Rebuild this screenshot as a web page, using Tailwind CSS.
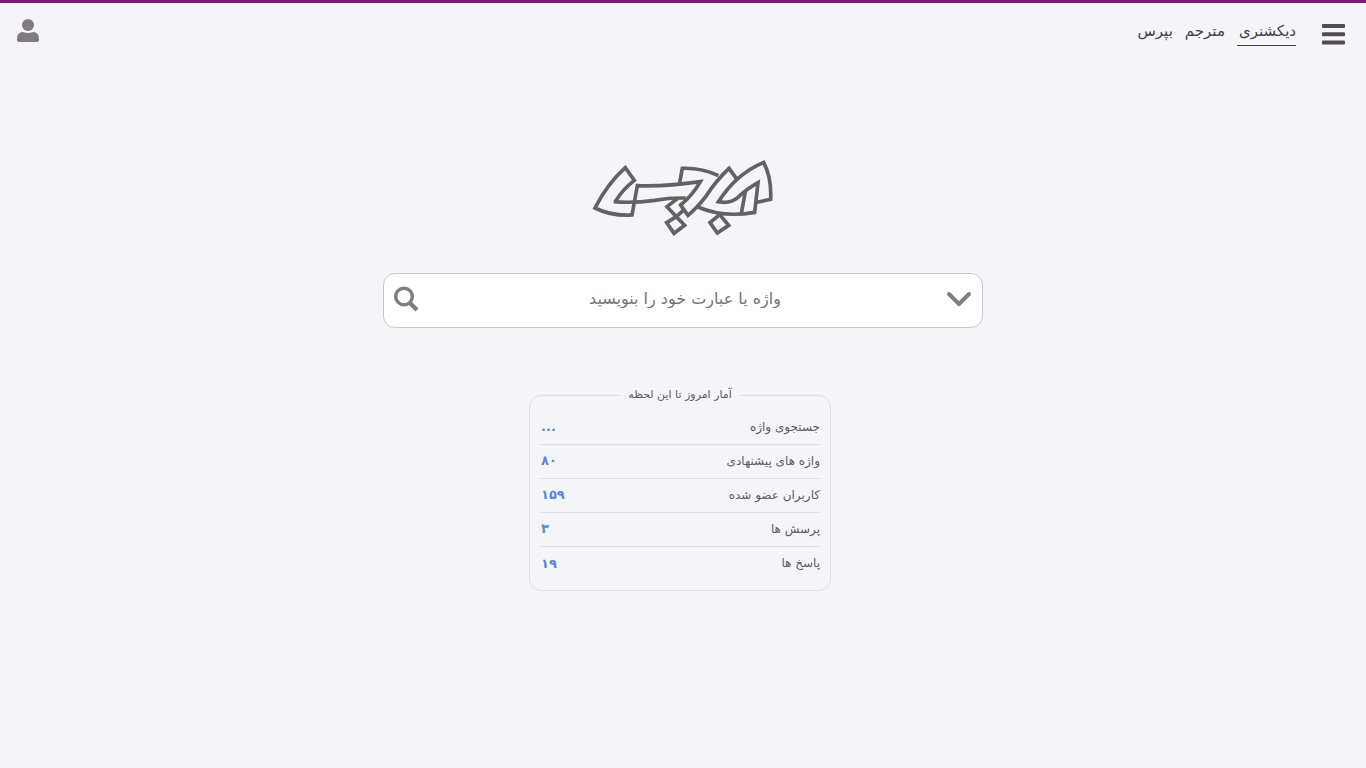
<!DOCTYPE html>
<html lang="fa" dir="rtl">
<head>
    <meta charset="UTF-8">
    <meta name="viewport" content="width=device-width, initial-scale=1">
    <title>آبادیس</title>
    <script src="https://cdn.jsdelivr.net/npm/@tailwindcss/browser@4"></script>
</head>
<body class="min-h-screen bg-[#f4f4f9] border-t-3 border-[#7f1776] font-['DejaVu_Sans',sans-serif] text-[#5c5c5f]">

<!-- Header -->
<header class="flex justify-between items-start px-4 pt-4">
    <div class="flex items-start gap-6">
        <button type="button" aria-label="منو" class="pt-1 pr-1">
            <svg class="w-6 h-6" viewBox="0 0 24 24" fill="#504d52"><rect x="0" y="1" width="23" height="4" rx="1"/><rect x="0" y="9.3" width="23" height="4" rx="1"/><rect x="0" y="17.6" width="23" height="4" rx="1"/></svg>
        </button>
        <nav class="flex gap-3 pr-0.5 text-[15px] leading-6 text-[#434246]">
            <a href="#" class="border-b border-[#434246] pl-0.5 pb-0.5">دیکشنری</a>
            <a href="#">مترجم</a>
            <a href="#">بپرس</a>
        </nav>
    </div>
    <a href="#" aria-label="ورود">
        <svg class="w-6 h-6" viewBox="0 0 24 24" fill="#7e7c82"><circle cx="12" cy="6" r="6"/><path d="M7 13q5 2 10 0q6 0 6 7v1q0 2-2 2H3q-2 0-2-2v-1q0-7 6-7z"/></svg>
    </a>
</header>

<main class="flex flex-col items-center pt-26 px-4">
    <!-- Logo -->
    <svg class="w-[205px] h-[95px]" viewBox="4 3 615 285" fill="none" stroke="#626164" stroke-width="11" role="img" aria-label="آبادیس">
        <path d="M107 155Q128 119 164 91L137 53Q84 100 46 174Q96 199 157 195L173 107Q260 110 362 95Q339 136 303 165L325 196Q352 174 378 140Q408 93 448 55L472 88"/>
        <path d="M102 155Q160 160 225 151Q270 143 318 144M300 98L308 55Q366 53 416 77"/>
        <path d="M355 171Q430 204 525 187L535 98Q502 116 474 143Q452 162 416 155Q445 112 472 88Q508 55 552 37Q576 83 573 148L532 157M497 125L485 190"/>
        <path d="M293 146L262 170L290 200L314 178M290 200L261 218L283 250L315 226L290 200M420 194L391 218L413 249L447 226L420 194"/>
    </svg>

    <!-- Search -->
    <form class="w-full max-w-[600px] h-[55px] mt-[27px] px-2 pb-1 flex items-center bg-white border border-[#c8c8c8] rounded-xl">
        <button type="button" aria-label="انتخاب"><svg class="w-8 h-8" viewBox="0 0 32 32" fill="none" stroke="#807e82" stroke-width="4" stroke-linecap="round" stroke-linejoin="round"><path d="M7 11l10 10 10-10"/></svg></button>
        <input type="text" aria-label="جستجو" placeholder="واژه یا عبارت خود را بنویسید" class="flex-1 min-w-0 pl-2 text-center text-base outline-none placeholder:text-[#757575]">
        <button type="submit" aria-label="جستجو"><svg class="w-7 h-7" viewBox="0 0 28 28" fill="none" stroke="#807e82" stroke-width="3.5"><circle cx="12" cy="11.5" r="8.3"/><path d="M17 17l8 8" stroke-width="4.5"/></svg></button>
    </form>

    <!-- Today stats -->
    <fieldset class="w-[302px] mt-[59px] mr-1.5 px-2.5 pt-[7px] pb-2.5 border border-[#dedee0] rounded-xl">
        <legend class="mx-auto px-2 text-[11px] leading-4">آمار امروز تا این لحظه</legend>
        <table class="w-full text-xs">
            <tr class="h-[34px] border-b border-[#dedee0]"><th scope="row" class="font-normal text-right">جستجوی واژه</th><td class="pl-px text-left font-bold text-[13px] text-[#5588e6]">...</td></tr>
            <tr class="h-[34px] border-b border-[#dedee0]"><th scope="row" class="font-normal text-right">واژه های پیشنهادی</th><td class="pl-px text-left font-bold text-[13px] text-[#5588e6]">۸۰</td></tr>
            <tr class="h-[34px] border-b border-[#dedee0]"><th scope="row" class="font-normal text-right">کاربران عضو شده</th><td class="pl-px text-left font-bold text-[13px] text-[#5588e6]">۱۵۹</td></tr>
            <tr class="h-[34px] border-b border-[#dedee0]"><th scope="row" class="font-normal text-right">پرسش ها</th><td class="pl-px text-left font-bold text-[13px] text-[#5588e6]">۳</td></tr>
            <tr class="h-[34px]"><th scope="row" class="font-normal text-right">پاسخ ها</th><td class="pl-px text-left font-bold text-[13px] text-[#5588e6]">۱۹</td></tr>
        </table>
    </fieldset>
</main>

</body>
</html>
